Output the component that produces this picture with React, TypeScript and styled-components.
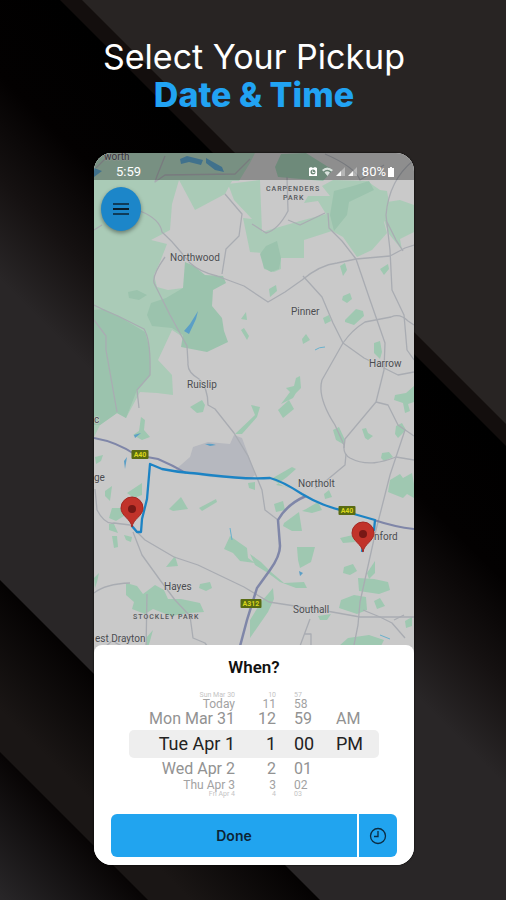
import React from "react";
import styled, { createGlobalStyle, css } from "styled-components";

const GlobalStyle = createGlobalStyle`
  *, *::before, *::after { box-sizing: border-box; }
  body { margin: 0; background: #282423; font-family: Roboto, "Liberation Sans", sans-serif; }
`;

const Page = styled.main`
  position: relative;
  min-height: 100vh;
  overflow: hidden;
  display: flex;
  flex-direction: column;
  padding: 38px 92px 35px 94px;
`;

const Backdrop = styled.svg`
  position: absolute;
  inset: 0;
  width: 100%;
  height: 100%;
`;

const Headline = styled.h1`
  position: relative;
  margin: 0 -40px 39px;
  text-align: center;
  font: 400 34px/38px Inter, "Open Sans", sans-serif;
  color: #fff;
`;

const Accent = styled.span`
  display: block;
  font-weight: 800;
  color: #21a3f3;
`;

const Phone = styled.section`
  position: relative;
  border-radius: 18px;
  overflow: hidden;
  background: #fff;
  box-shadow: 0 0 2px #000;
`;

const MapArea = styled.div`
  position: relative;
`;

const MapSvg = styled.svg`
  display: block;
  width: 100%;
  height: auto;
`;

const StatusBar = styled.div`
  position: absolute;
  top: 0;
  left: 0;
  right: 0;
  height: 27px;
  padding: 11px 20px 0 22px;
  display: flex;
  justify-content: space-between;
  background: rgba(0, 0, 0, 0.29);
  color: #fff;
  font-size: 13px;
  line-height: 16px;
`;

const StatusGroup = styled.span`
  display: flex;
  align-items: center;
  gap: 2px;
`;

const MenuButton = styled.button`
  position: absolute;
  top: 34px;
  left: 7px;
  width: 40px;
  height: 44px;
  padding: 0;
  border: 0;
  border-radius: 50%;
  display: grid;
  place-items: center;
  background: #1c86c9;
  box-shadow: 0 2px 4px rgba(0, 0, 0, 0.4);
`;

const Sheet = styled.div`
  position: relative;
  margin-top: -8px;
  padding: 12px 17px 8px;
  border-radius: 8px 8px 0 0;
  background: #fff;
`;

const SheetTitle = styled.h2`
  margin: 0 0 15px;
  text-align: center;
  font-size: 17px;
  font-weight: 600;
  line-height: 20px;
  color: #111;
`;

const Wheels = styled.div`
  position: relative;
  display: grid;
  grid-template-columns: 106fr 41fr 42fr 61fr;
  margin: 0 18px 17px;

  &::before {
    content: "";
    position: absolute;
    top: 38px;
    left: 0;
    right: 0;
    height: 28px;
    border-radius: 5px;
    background: #eeeeee;
  }
`;

const Wheel = styled.div<{ $start?: boolean }>`
  position: relative;
  display: grid;
  grid-template-rows: 6px 10px 22px 28px 21px 12px 6px;
  text-align: ${(p) => (p.$start ? "left" : "right")};
  padding-left: ${(p) => (p.$start ? "18px" : "0")};
  white-space: nowrap;
`;

const depth = {
  0: css`font-size: 18px; line-height: 28px; color: #222;`,
  1: css`font-size: 16px; line-height: 22px; color: #929292;`,
  2: css`font-size: 12px; line-height: 12px; color: #a2a2a2;`,
  3: css`font-size: 7px; line-height: 6px; color: #c4c4c4;`,
};

const Option = styled.div<{ $depth: 0 | 1 | 2 | 3 }>`
  ${(p) => depth[p.$depth]}
`;

const Actions = styled.div`
  display: flex;
  gap: 2px;
`;

const ActionButton = styled.button<{ $grow?: boolean }>`
  flex: ${(p) => (p.$grow ? "1" : "0 0 38px")};
  height: 43px;
  padding: 0;
  border: 0;
  border-radius: ${(p) => (p.$grow ? "6px 0 0 6px" : "0 6px 6px 0")};
  display: grid;
  place-items: center;
  background: #21a4ef;
  color: #0c2434;
  font: 600 14px/20px Inter, sans-serif;
`;

const PlaceName = styled.text`
  font: 400 10px Roboto, sans-serif;
  fill: #4a4c4f;
  stroke: #cfcfcf;
  stroke-width: 1px;
  paint-order: stroke;
`;

const DistrictName = styled.text`
  font: 500 7px Roboto, sans-serif;
  letter-spacing: 1px;
  fill: #55585b;
`;

const ShieldText = styled.text`
  font: 700 7px Roboto, sans-serif;
  fill: #d9d61c;
  text-anchor: middle;
`;

const lightParks = [
  "94,153 255,153 250,163 239,181 232,181 225,194 195,210 179,180 172,204 170,230 151,240 167,244 160,262 154,275 157,287 168,290 183,288 200,300 212,307 216,320 183,337 172,330 158,360 172,375 173,395 157,393 140,392 126,418 117,413 100,425 94,437",
  "228,184 260,180 262,232 300,221 326,214 318,201 304,203 308,196 330,196 322,186 333,180 367,181 380,190 387,191 390,208 384,222 387,233 372,250 357,257 343,237 332,231 304,240 304,258 281,258 281,269 274,272 264,269 262,253 250,252 243,218 252,219 234,200",
  "387,202 400,200 414,205 414,232 400,239 402,250 389,234 384,220",
];

const darkParks = [
  "94,310 104,309 120,317 145,332 150,350 150,375 137,390 126,418 117,413 100,425 94,425",
  "185,262 194,266 205,275 223,276 226,283 213,290 212,306 222,318 224,331 228,342 207,352 181,347 183,335 172,328 152,326 147,315 151,303 166,298 183,288",
  "266,246 277,241 281,258 279,269 271,272 264,268 260,254",
  "334,191 353,186 369,181 374,190 349,202 347,215 334,231 330,215",
  "281,154 306,153 333,170 323,181 278,177 275,167",
  "128,292 137,290 147,295 139,300 129,298",
];

const patches = [
  "269,289 276,285 277,291 270,297", "340,266 345,263 347,270 343,276", "380,269 388,264 389,269 384,275",
  "343,296 350,293 352,299 347,303 342,300", "345,320 356,309 363,311 364,316 354,325 345,322",
  "323,318 329,315 331,321 325,324", "302,339 306,334 310,340 303,344", "374,343 380,341 382,352 380,359 374,353",
  "296,378 300,376 301,388 296,393 293,398 281,404 290,392 286,388 294,386", "278,410 289,400 294,409 283,418",
  "241,319 246,312 247,320", "241,330 244,328 249,336 247,340", "190,407 202,400 205,405 203,412 197,413",
  "235,434 255,415 251,405 260,407 257,417 242,434", "333,430 339,427 345,440 343,444 336,440",
  "362,429 366,428 368,433 373,436 368,440 365,438", "395,395 406,393 414,386 414,402 408,404 410,411 405,413 403,403 394,400",
  "396,426 402,423 406,430 398,438 395,434", "382,453 389,452 393,457 384,461 381,458",
  "390,480 400,474 403,478 412,473 414,484 414,498 407,494 403,498 388,492", "271,479 292,467 296,469 287,477 276,485 298,489 285,487",
  "141,417 145,420 144,430 150,437 142,440 133,435 139,431", "95,457 103,455 101,461 96,464", "248,483 255,482 255,490 249,488",
  "127,493 142,483 142,495 134,498", "105,491 112,486 110,501 105,496", "112,508 122,508 127,514 116,521 109,518",
  "109,524 114,524 118,533 109,530", "112,536 117,536 118,547 114,548", "124,535 132,537 131,542 126,540",
  "169,509 181,497 188,509 173,511", "199,508 216,499 217,502 202,511", "170,562 175,556 178,566 166,567",
  "224,549 230,536 247,548 248,558 255,563 240,561 233,553", "274,504 283,501 285,510 276,512", "306,509 318,502 322,510 312,513 302,511",
  "284,523 299,512 302,531 292,531 283,526", "324,494 329,490 332,497 325,499", "297,547 315,547 311,562 300,568 298,560",
  "250,554 261,562 271,572 284,583 304,582 307,588 296,588 280,582 268,573 255,565", "268,594 273,588 274,599 268,612 250,638 250,620 261,602",
  "126,583 137,586 143,594 155,585 164,590 168,599 181,599 200,603 204,612 190,613 171,616 153,609 145,614 132,609 134,602 126,595",
  "200,584 210,582 212,588 206,591 199,588", "340,538 353,535 355,542 343,543", "344,567 353,564 357,571 350,575 343,573",
  "367,573 375,561 375,573 369,579", "358,578 374,579 388,582 390,590 379,594 359,591", "341,600 354,595 366,597 367,610 357,614 339,608",
  "374,601 380,598 385,606 377,609", "405,621 412,617 412,626 406,628", "348,638 369,635 384,640 381,646 351,649 339,646",
  "94,578 99,573 97,582 95,588", "146,638 153,630 150,641 147,650", "318,616 331,614 327,620 320,620",
];

const roads = [
  "M94 230L102 225M140 211Q160 219 162 232Q172 241 180 251L190 263Q200 272 217 276L244 286L268 302L285 292L302 280Q320 265 337 263L356 259L390 256L405 248L414 245",
  "M165 257Q150 278 155 285L170 315L187 346L188 363Q187 372 199 379Q208 388 208 405L215 409L234 433L248 456L262 490L265 510L278 520",
  "M225 194L242 214L239 236L226 249L222 274",
  "M287 177L288 211Q278 230 266 233L252 224M288 220L300 225L325 213M328 213L329 228L342 241L356 259L370 300L385 343L384 370L376 402L345 439L344 448",
  "M303 276L322 297L333 323L343 343L364 358L398 375L414 372M343 343Q352 330 365 322L391 317Q400 313 408 321L414 325",
  "M343 343L322 380Q317 397 335 425L344 445Q343 454 350 458C367 467 383 462 396 457L414 460",
  "M376 402L388 405L398 425L414 436M405 430L390 475L376 530L360 602L358 625L353 650",
  "M414 160Q389 180 386 215L390 250L392 290L404 315L407 350L414 360M386 220L396 240L403 251",
  "M346 454L345 465L327 480L315 488",
  "M95 489L97 510Q105 525 114 523L130 525L145 540L174 557L198 565L244 587L269 602L321 610L360 617L414 617",
  "M133 532L142 555L160 580L175 600L190 616L193 638L205 643L210 650M94 593Q105 584 130 583M147 594L146 650M98 653L112 641L126 648",
  "M310 619L300 646M304 634L311 634L311 650M363 610L380 617L392 623L405 638M394 620L404 615",
  "M94 320L106 336L106 350L117 412M94 305L104 310L118 316L144 329Q151 340 150 375L137 390L139 408",
  "M96 168L109 155M165 156L157 176L155 182L165 175L235 174L250 159M325 154Q355 167 360 180L384 165",
];

const places: [string, number, number][] = [
  ["Northwood", 170, 261], ["Pinner", 291, 315], ["Harrow", 369, 367], ["Ruislip", 187, 388],
  ["Northolt", 298, 487], ["nford", 374, 540], ["Hayes", 164, 590], ["Southall", 293, 613],
  ["est Drayton", 95, 642], ["ge", 94, 481], ["worth", 104, 160], ["c", 94, 423],
];

const shields: [string, number, number, number][] = [
  ["A40", 140, 455, 17], ["A40", 347, 511, 17], ["A312", 251, 604, 21],
];

const pins: [number, number][] = [[132, 527], [363, 552]];

const route = "M132 526L137 532L141 532L142 519L147 499L150 464L162 469Q177 472 190 473C215 475 237 480 270 478Q282 481 302 494C322 506 334 508 347 512L375 520L374 530L364 537L362 552";

function CityMap() {
  return (
    <MapSvg viewBox="94 153 320 500" role="img" aria-label="Route map">
      <rect x="94" y="153" width="320" height="500" fill="#c9c9c9" />
      {lightParks.map((p) => <polygon key={p} points={p} fill="#aacbb7" />)}
      {darkParks.map((p) => <polygon key={p} points={p} fill="#9bc3ad" />)}
      {patches.map((p) => <polygon key={p} points={p} fill="#9fc8b1" />)}
      <path d="M174 471L190 457L193 447L208 442L230 444L234 435L242 438L248 454L255 475L250 479L210 477Z" fill="#b6b8bf" />
      <g fill="#5b9fc6">
        <path d="M184 331L190 324L198 311L196 319L189 334ZM180 159L187 156L203 160L201 165L189 162L181 164ZM206 158L222 167L224 172L215 170L206 163ZM94 168L102 171L94 177Z" />
        <path d="M205 444Q211 443 216 445L210 446ZM134 435L141 433L135 438ZM299 571L303 573L300 576ZM124 461L127 457L125 469Z" />
      </g>
      <path d="M315 350Q319 347 325 347M380 635L390 639M230 528L232 540" fill="none" stroke="#69b1cd" strokeWidth="1" />
      {roads.map((d) => <path key={d} d={d} fill="none" stroke="#a9acb2" strokeWidth="1.300" strokeLinejoin="round" />)}
      <g fill="none" stroke="#7f86a8" strokeWidth="2">
        <path d="M94 438Q117 442 136 455L158 459Q172 465 186 473M374 520Q395 527 414 529" />
        <path strokeWidth="2.500" d="M306 496Q287 504 278 520L280 546Q280 556 270 570L257 588L247 620L239 650" />
      </g>
      <path d={route} fill="none" stroke="#1c83c4" strokeWidth="2.300" strokeLinejoin="round" />
      {places.map(([name, x, y]) => <PlaceName key={name} x={x} y={y}>{name}</PlaceName>)}
      <DistrictName x="266" y="191">CARPENDERS</DistrictName>
      <DistrictName x="283" y="200">PARK</DistrictName>
      <DistrictName x="133" y="619">STOCKLEY PARK</DistrictName>
      {shields.map(([name, x, y, w]) => (
        <g key={x}>
          <rect x={x - w / 2} y={y - 5} width={w} height="9" rx="1" fill="#596b12" />
          <ShieldText x={x} y={y + 2}>{name}</ShieldText>
        </g>
      ))}
      {pins.map(([x, y]) => (
        <g key={x} transform={`translate(${x} ${y})`}>
          <path d="M0 0C-1 -8 -11 -11 -11 -19A11 11 0 0 1 11 -19C11 -11 1 -8 0 0Z" fill="#c1332a" stroke="#a52721" strokeWidth="1" />
          <circle cy="-18" r="4" fill="#771815" />
        </g>
      ))}
    </MapSvg>
  );
}

function StatusIcons() {
  return (
    <svg width="51" height="12" viewBox="0 0 51 12" fill="#fff" aria-hidden="true">
      <path fillRule="evenodd" d="M0 2L2 1L4 2L6 1L8 2V10H0ZM4 3.5A2.5 2.5 0 1 0 4 8.5A2.5 2.5 0 1 0 4 3.5ZM4 4.5V6H5.5V7H3.3V4.5Z" />
      <path d="M13 4Q18 -1 24 4L22.500 5.500Q18 2 14.500 5.500ZM15.500 6.500Q18 4 21 6.500L18.500 10Z" opacity="0.75" />
      <path d="M27 10L36 1V10ZM39 10L48 1V10Z" opacity="0.35" />
      <path d="M27 10L32 5V10ZM39 10L44 5V10Z" opacity="0.9" />
    </svg>
  );
}

type Column = { label: string; start?: boolean; items: string[] };

const columns: Column[] = [
  { label: "Date", items: ["Sun Mar 30", "Today", "Mon Mar 31", "Tue Apr 1", "Wed Apr 2", "Thu Apr 3", "Fri Apr 4"] },
  { label: "Hour", items: ["10", "11", "12", "1", "2", "3", "4"] },
  { label: "Minute", start: true, items: ["57", "58", "59", "00", "01", "02", "03"] },
  { label: "AM or PM", start: true, items: ["", "", "AM", "PM", "", "", ""] },
];

export default function App() {
  return (
    <>
      <GlobalStyle />
      <Page>
        <Backdrop viewBox="0 0 506 900" preserveAspectRatio="none" aria-hidden="true">
          <defs>
            <linearGradient id="fadeA" gradientUnits="userSpaceOnUse" x1="60" y1="0" x2="-110" y2="170">
              <stop offset="0" stopColor="#000" />
              <stop offset="0.4" stopColor="#030101" />
              <stop offset="0.7" stopColor="#151111" />
              <stop offset="1" stopColor="#292627" />
            </linearGradient>
            <linearGradient id="fadeB" gradientUnits="userSpaceOnUse" x1="0" y1="580" x2="-65" y2="645">
              <stop offset="0" stopColor="#040202" />
              <stop offset="1" stopColor="#1a1615" />
            </linearGradient>
            <linearGradient id="fadeC" gradientUnits="userSpaceOnUse" x1="0" y1="752" x2="-72" y2="824">
              <stop offset="0" stopColor="#070404" />
              <stop offset="1" stopColor="#282628" />
            </linearGradient>
          </defs>
          <rect width="506" height="900" fill="#282423" />
          <path d="M0 0H82L506 424V900H0Z" fill="#130e0d" />
          <path d="M0 0H60L506 446V900H0Z" fill="url(#fadeA)" />
          <path d="M0 580L320 900H0Z" fill="url(#fadeB)" />
          <path d="M0 752L148 900H0Z" fill="url(#fadeC)" />
        </Backdrop>
        <Headline>Select Your Pickup <Accent>Date &amp; Time</Accent></Headline>
        <Phone>
          <MapArea>
            <CityMap />
            <StatusBar>
              <span>5:59</span>
              <StatusGroup>
                <StatusIcons />
                <span>80%</span>
                <svg width="6" height="10" viewBox="0 0 6 10" fill="#fff" aria-hidden="true">
                  <path d="M2 0H4V1H6V10H0V1H2Z" />
                </svg>
              </StatusGroup>
            </StatusBar>
            <MenuButton type="button" aria-label="Menu">
              <svg width="16" height="14" viewBox="0 0 16 14" stroke="#0a1c29" strokeWidth="2" aria-hidden="true">
                <path d="M0 2H16M0 12H16" opacity="0.7" />
                <path d="M0 7H16" />
              </svg>
            </MenuButton>
          </MapArea>
          <Sheet>
            <SheetTitle>When?</SheetTitle>
            <Wheels>
              {columns.map((c) => (
                <Wheel key={c.label} role="listbox" aria-label={c.label} $start={c.start}>
                  {c.items.map((item, i) => (
                    <Option key={i} role="option" aria-selected={i === 3} $depth={Math.abs(i - 3) as 0 | 1 | 2 | 3}>
                      {item}
                    </Option>
                  ))}
                </Wheel>
              ))}
            </Wheels>
            <Actions>
              <ActionButton type="button" $grow>Done</ActionButton>
              <ActionButton type="button" aria-label="Pick a time">
                <svg width="18" height="18" viewBox="0 0 18 18" fill="none" stroke="#0c2c42" strokeWidth="1.300" aria-hidden="true">
                  <circle cx="9" cy="9" r="7.500" />
                  <path d="M9 4V9.500H5" />
                </svg>
              </ActionButton>
            </Actions>
          </Sheet>
        </Phone>
      </Page>
    </>
  );
}
